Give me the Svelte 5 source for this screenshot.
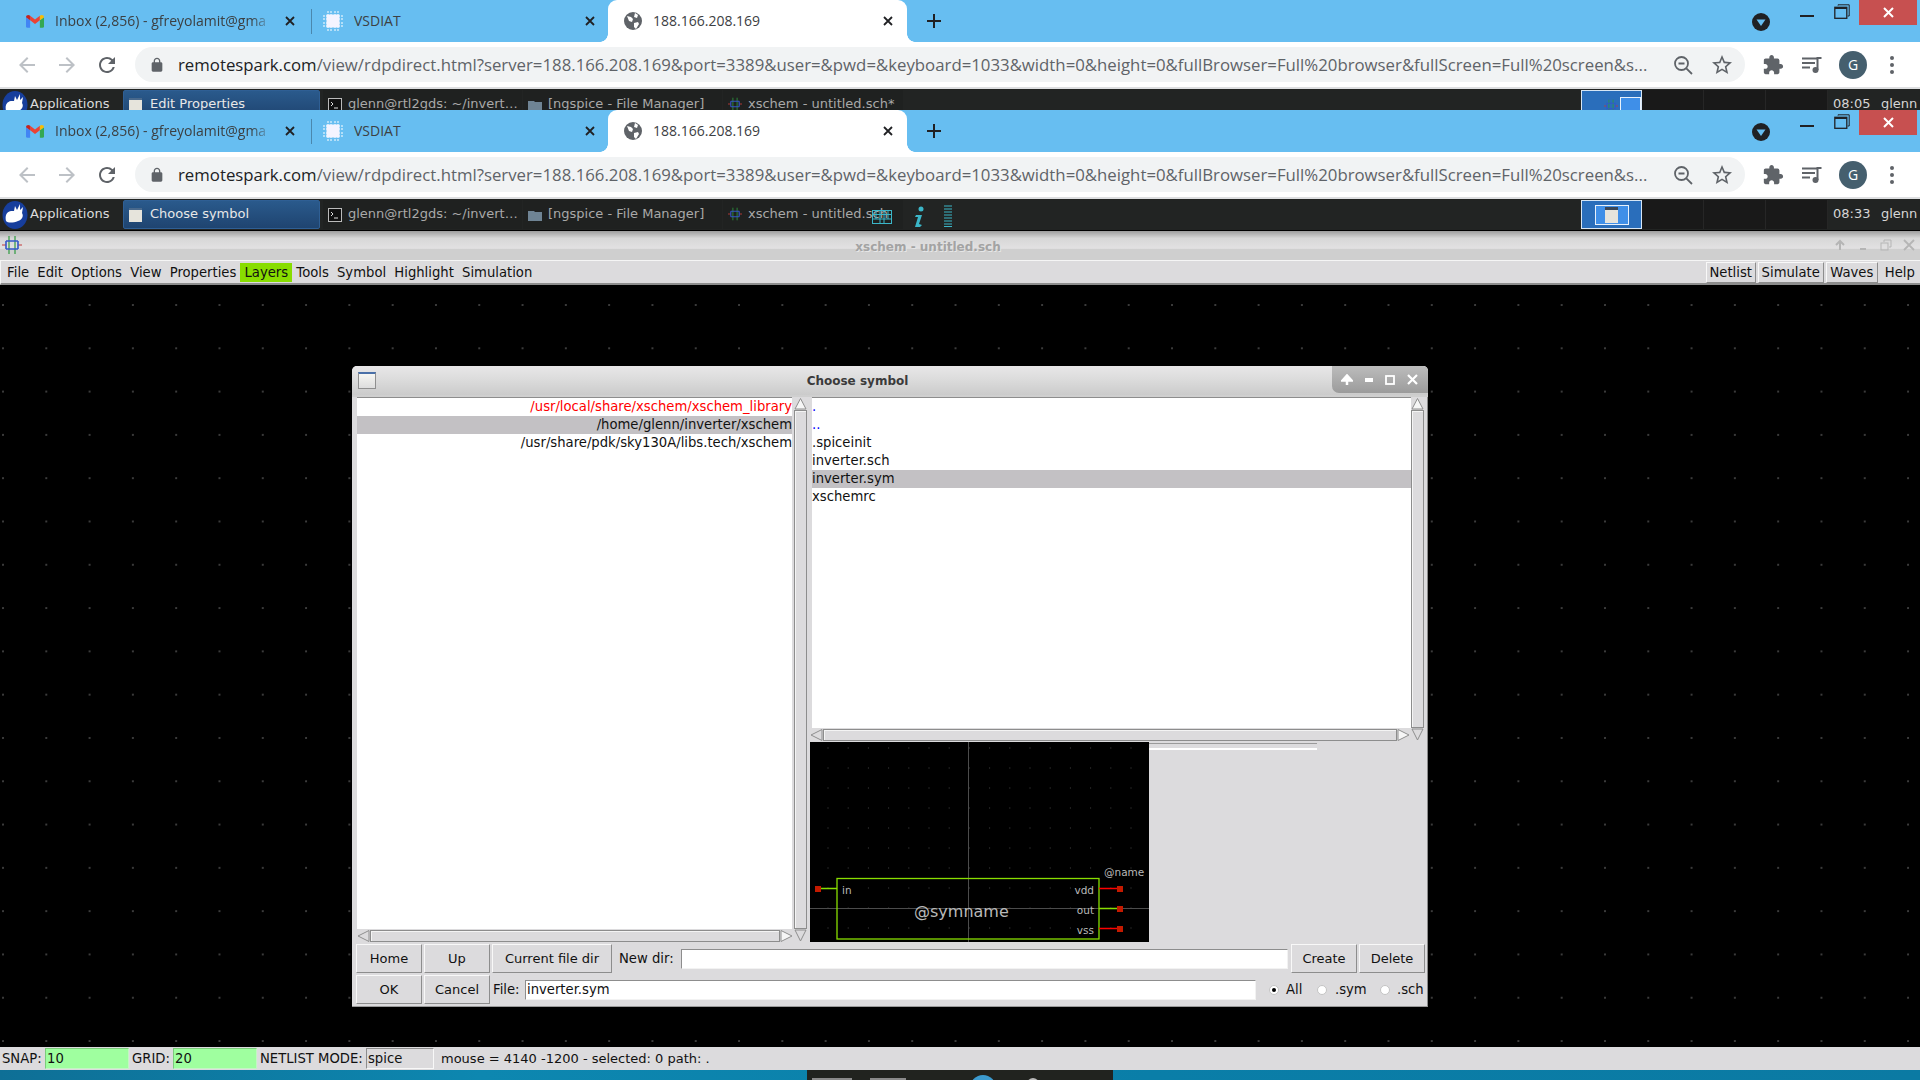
<script>
  const leftRows = [
    { name: '/usr/local/share/xschem/xschem_library', color: '#ff0000' },
    { name: '/home/glenn/inverter/xschem', selected: true },
    { name: '/usr/share/pdk/sky130A/libs.tech/xschem' }
  ]
  const rightRows = [
    { name: '.', color: '#0000ff' },
    { name: '..', color: '#0000ff' },
    { name: '.spiceinit' },
    { name: 'inverter.sch' },
    { name: 'inverter.sym', selected: true },
    { name: 'xschemrc' }
  ]
  const menus = ['File', 'Edit', 'Options', 'View', 'Properties', 'Layers', 'Tools', 'Symbol', 'Highlight', 'Simulation']
  const gridXs = Array.from({ length: 17 }, (_, i) => 17.5 + i * 20.2)
  const gridYs = Array.from({ length: 10 }, (_, i) => 5.5 + i * 20)
  const url = 'remotespark.com'
  const urlRest = '/view/rdpdirect.html?server=188.166.208.169&port=3389&user=&pwd=&keyboard=1033&width=0&height=0&fullBrowser=Full%20browser&fullScreen=Full%20screen&s...'
</script>

{#snippet xschemIcon(size)}
  <svg width={size} height={size} viewBox="0 0 20 20" fill="none">
    <path d="M7 1v18M13 1v18" stroke="#2f9a3f" stroke-width="1.2" />
    <path d="M0 10h4M16 10h4" stroke="#c43a3a" stroke-width="1.2" />
    <path d="M4 6h12M4 14h12M4 6v8M16 6v8" stroke="#3458c8" stroke-width="1.6" />
  </svg>
{/snippet}

{#snippet browser(task, clock, first)}
  <div class="tabstrip">
    <div class="tab">
      <svg class="favicon" width="18" height="14" viewBox="0 0 24 18">
        <path d="M0 4v12a2 2 0 0 0 2 2h3.5V8z" fill="#4285f4" />
        <path d="M24 4v12a2 2 0 0 1-2 2h-3.5V8z" fill="#34a853" />
        <path d="M5.5 8 12 13l6.5-5V2L12 7 5.5 2z" fill="#ea4335" />
        <path d="M0 4c0-3 3.5-4 5.5-2v6z" fill="#c5221f" />
        <path d="M24 4c0-3-3.5-4-5.5-2v6z" fill="#fbbc04" />
      </svg>
      <span class="tab-title fade">Inbox (2,856) - gfreyolamit@gma</span>
      <svg class="tab-x" width="10" height="10" viewBox="0 0 10 10"><path d="M1 1l8 8M9 1l-8 8" stroke="#202124" stroke-width="1.8" /></svg>
    </div>
    <div class="tab second">
      <svg class="favicon" width="20" height="20" viewBox="0 0 20 20">
        <path d="M5 0v20M8 0v20M12 0v20M15 0v20M0 5h20M0 8h20M0 12h20M0 15h20" stroke="#fff" stroke-width="1" stroke-dasharray="2 1" />
        <rect x="3.5" y="3.5" width="13" height="13" fill="#f4f4ff" />
      </svg>
      <span class="tab-title">VSDIAT</span>
      <svg class="tab-x" width="10" height="10" viewBox="0 0 10 10"><path d="M1 1l8 8M9 1l-8 8" stroke="#202124" stroke-width="1.8" /></svg>
    </div>
    <div class="tab active">
      <svg class="favicon" width="18" height="18" viewBox="0 0 18 18">
        <circle cx="9" cy="9" r="9" fill="#5f6368" />
        <path d="M3 4l4 1 2 2-1 3-3-1zM11 1l3 2-1 3-3-1zM10 11l4-1 1 2-3 5-2-2z" fill="#fff" />
      </svg>
      <span class="tab-title">188.166.208.169</span>
      <svg class="tab-x" width="10" height="10" viewBox="0 0 10 10"><path d="M1 1l8 8M9 1l-8 8" stroke="#202124" stroke-width="1.8" /></svg>
    </div>
    <svg class="plus" width="14" height="14" viewBox="0 0 14 14"><path d="M7 0v14M0 7h14" stroke="#202124" stroke-width="2" /></svg>
    <div class="tab-spacer"></div>
    <svg class="media" width="18" height="18" viewBox="0 0 18 18">
      <circle cx="9" cy="9" r="9" fill="#202124" />
      <path d="M4.5 6.500h9L9 13z" fill="#67bef1" />
    </svg>
    <div class="win-min"></div>
    <svg class="win-restore" width="16" height="15" viewBox="0 0 16 15" fill="none">
      <path d="M4 1.500V0.800h11.200V12h-1.500" stroke="#202124" />
      <rect x="0.800" y="3.300" width="12" height="11" stroke="#202124" stroke-width="1.300" />
      <path d="M1 4h12" stroke="#202124" stroke-width="2" />
    </svg>
    <div class="win-close">
      <svg width="11" height="11" viewBox="0 0 11 11"><path d="M1 1l9 9M10 1l-9 9" stroke="#fff" stroke-width="2" /></svg>
    </div>
  </div>

  <div class="toolbar">
    <div class="nav">
      <svg width="24" height="24" viewBox="0 0 24 24"><path d="M20 11H7.830l5.590-5.590L12 4l-8 8 8 8 1.410-1.410L7.830 13H20v-2z" fill="#bdc1c6" /></svg>
    </div>
    <div class="nav">
      <svg width="24" height="24" viewBox="0 0 24 24"><path d="M4 11h12.170l-5.590-5.590L12 4l8 8-8 8-1.410-1.410L16.170 13H4v-2z" fill="#bdc1c6" /></svg>
    </div>
    <div class="nav">
      <svg width="24" height="24" viewBox="0 0 24 24"><path d="M17.650 6.350A7.958 7.958 0 0 0 12 4c-4.420 0-7.990 3.580-7.990 8s3.570 8 7.990 8c3.730 0 6.840-2.550 7.730-6h-2.080A5.990 5.990 0 0 1 12 18c-3.310 0-6-2.690-6-6s2.690-6 6-6c1.660 0 3.140.69 4.220 1.780L13 11h7V4l-2.350 2.350z" fill="#5f6368" /></svg>
    </div>
    <div class="omnibox">
      <svg class="lock" width="16" height="16" viewBox="0 0 24 24"><path d="M18 8h-1V6c0-2.760-2.240-5-5-5S7 3.240 7 6v2H6c-1.100 0-2 .9-2 2v10c0 1.100.9 2 2 2h12c1.100 0 2-.9 2-2V10c0-1.100-.9-2-2-2zM9 6c0-1.660 1.340-3 3-3s3 1.340 3 3v2H9V6z" fill="#5f6368" /></svg>
      <div class="url"><span class="url-host">{url}</span>{urlRest}</div>
      <svg class="omni-icon" width="20" height="20" viewBox="0 0 20 20" fill="none" stroke="#5f6368" stroke-width="1.8">
        <circle cx="8.500" cy="8.500" r="6.500" /><path d="M13.300 13.300 19 19M5.500 8.500h6" />
      </svg>
      <svg class="omni-icon star" width="24" height="24" viewBox="0 0 24 24"><path d="M22 9.240l-7.190-.62L12 2 9.190 8.630 2 9.240l5.460 4.730L5.820 21 12 17.270 18.180 21l-1.630-7.030L22 9.240zM12 15.400l-3.760 2.270 1-4.280-3.320-2.880 4.380-.38L12 6.100l1.710 4.040 4.380.38-3.320 2.880 1 4.280L12 15.400z" fill="#5f6368" /></svg>
    </div>
    <svg class="puzzle" width="22" height="22" viewBox="0 0 24 24"><path d="M20.500 11H19V7c0-1.100-.9-2-2-2h-4V3.500C13 2.120 11.880 1 10.500 1S8 2.120 8 3.500V5H4c-1.100 0-1.990.9-1.990 2v3.800H3.500c1.490 0 2.700 1.210 2.700 2.700s-1.210 2.700-2.700 2.700H2V20c0 1.100.9 2 2 2h3.800v-1.500c0-1.490 1.210-2.700 2.700-2.700 1.490 0 2.700 1.210 2.700 2.700V22H17c1.100 0 2-.9 2-2v-4h1.500c1.380 0 2.500-1.120 2.500-2.500S21.880 11 20.500 11z" fill="#5f6368" /></svg>
    <svg class="queue" width="20" height="16" viewBox="0 0 20 16" fill="none">
      <path d="M0 1.500h15M0 6h13M0 10.500h8" stroke="#5f6368" stroke-width="2" />
      <circle cx="13.500" cy="13" r="3" fill="#5f6368" /><path d="M15.500 13V1h4" stroke="#5f6368" stroke-width="2" />
    </svg>
    <div class="avatar">G</div>
    <svg class="dots" width="6" height="20" viewBox="0 0 6 20"><circle cx="3" cy="3" r="2" fill="#5f6368" /><circle cx="3" cy="10" r="2" fill="#5f6368" /><circle cx="3" cy="17" r="2" fill="#5f6368" /></svg>
  </div>

  <div class="panel">
    <div class="apps">
      <svg width="26" height="28" viewBox="0 0 26 28">
        <ellipse cx="13" cy="14" rx="12.500" ry="14" fill="#173e9c" />
        <path d="M4 20c-1-5 0-9 5-10l3 0 1-5 2 4 3-6 0 6 3-3-1 6c2 3 0 7-4 8-5 2-10 2-12 0z" fill="#fff" />
      </svg>
      <span>Applications</span>
    </div>
    <div class="task current">
      <span class="doc-icon"></span>
      <span>{task}</span>
    </div>
    <div class="task">
      <svg class="task-icon" width="14" height="14" viewBox="0 0 14 14">
        <rect x="0.500" y="0.500" width="13" height="13" fill="#111" stroke="#bbb" />
        <path d="M3 4l2 2-2 2M6 10h4" stroke="#ddd" fill="none" />
      </svg>
      <span>glenn@rtl2gds: ~/invert…</span>
    </div>
    <div class="task">
      <svg class="task-icon" width="14" height="14" viewBox="0 0 14 14">
        <path d="M0 3h6l1 1h7v9H0z" fill="#6f8494" />
      </svg>
      <span>[ngspice - File Manager]</span>
    </div>
    <div class="task last">
      <span class="task-icon">{@render xschemIcon(14)}</span>
      <span>xschem - untitled.sch{first ? '*' : ''}</span>
    </div>
    {#if !first}
      <svg class="tray-kbd" width="20" height="14" viewBox="0 0 20 14" fill="none" stroke="#3bb6c8">
        <rect x="0.500" y="0.500" width="19" height="13" />
        <path d="M0 4.500h20M0 9h20M4 0v9M8 0v14M12 0v14M16 0v9" />
      </svg>
      <svg class="tray-info" width="12" height="22" viewBox="0 0 12 22">
        <circle cx="8" cy="3" r="2.500" fill="#3bb6c8" />
        <path d="M3 9h6l-3 9 3 1-2 2H2l3-10H2z" fill="#3bb6c8" />
      </svg>
      <svg class="tray-bars" width="8" height="22" viewBox="0 0 8 22">
        <path d="M0 1h8M0 4h8M0 7h8M0 10h8M0 13h8M0 16h8M0 19h8M0 21.500h8" stroke="#3bb6c8" />
      </svg>
    {/if}
    <div class="panel-spacer"></div>
    <div class="pager">
      <div class="workspace on">
        {#if first}
          <span class="ws-xschem">{@render xschemIcon(14)}</span>
          <span class="ws-win small"></span>
        {:else}
          <span class="ws-win"><span class="ws-doc"></span></span>
        {/if}
      </div>
      <div class="workspace"></div>
      <div class="workspace"></div>
      <div class="workspace"></div>
    </div>
    <span class="clock">{clock}</span>
    <span class="user">glenn</span>
  </div>
{/snippet}

{#snippet vbar()}
  <div class="vbar">
    <svg class="arrow" width="13" height="13" viewBox="0 0 13 13"><path d="M6.500 1.500 12 12H1z" fill="#f6f6f6" stroke="#8e8e8e" /></svg>
    <div class="thumb"></div>
    <svg class="arrow" width="13" height="13" viewBox="0 0 13 13"><path d="M6.500 12 12 1H1z" fill="#dcdbdd" stroke="#8e8e8e" /></svg>
  </div>
{/snippet}

{#snippet hbar()}
  <div class="hbar">
    <svg class="arrow" width="13" height="12" viewBox="0 0 13 12"><path d="M1 6l11-5.500v11z" fill="#dcdbdd" stroke="#8e8e8e" /></svg>
    <div class="thumb"></div>
    <svg class="arrow" width="13" height="12" viewBox="0 0 13 12"><path d="M12 6 1 .5v11z" fill="#f6f6f6" stroke="#8e8e8e" /></svg>
  </div>
{/snippet}

<div class="page">
  <div class="clipped">{@render browser('Edit Properties', '08:05', true)}</div>
  {@render browser('Choose symbol', '08:33', false)}

  <div class="xschem-title">
    <span class="xschem-icon">{@render xschemIcon(20)}</span>
    <span class="xschem-name">xschem - untitled.sch</span>
    <div class="xschem-controls">
      <svg width="12" height="12" viewBox="0 0 12 12"><path d="M6 11V2M2 6l4-4 4 4" stroke="#b5b5b5" stroke-width="2" fill="none" /></svg>
      <svg width="12" height="12" viewBox="0 0 12 12"><path d="M3 10h6" stroke="#b5b5b5" stroke-width="2" /></svg>
      <svg width="12" height="12" viewBox="0 0 12 12" fill="none" stroke="#b5b5b5"><rect x="1" y="4" width="7" height="7" /><path d="M4 3V1h7v7H9" /></svg>
      <svg width="12" height="12" viewBox="0 0 12 12"><path d="M1 1l10 10M11 1 1 11" stroke="#b5b5b5" stroke-width="1.8" /></svg>
    </div>
  </div>

  <div class="menubar">
    {#each menus as m}
      <span class="menu" class:layers={m === 'Layers'}>{m}</span>
    {/each}
    <div class="menu-spacer"></div>
    <span class="menu-btn netlist">Netlist</span>
    <span class="menu-btn simulate">Simulate</span>
    <span class="menu-btn waves">Waves</span>
    <span class="menu help">Help</span>
  </div>

  <div class="canvas">
    <div class="dialog">
      <div class="dialog-title">
        <span class="dialog-icon"></span>
        <span class="dialog-name">Choose symbol</span>
        <div class="dialog-controls">
          <svg width="12" height="12" viewBox="0 0 12 12"><path d="M6 11V3M1.500 6.500 6 1.500l4.500 5z" stroke="#fff" stroke-width="2.5" fill="#fff" /></svg>
          <svg width="8" height="4" viewBox="0 0 8 4"><rect width="8" height="4" fill="#fff" /></svg>
          <svg width="10" height="10" viewBox="0 0 10 10" fill="none"><rect x="1" y="1" width="8" height="8" stroke="#fff" stroke-width="1.8" /></svg>
          <svg width="11" height="11" viewBox="0 0 11 11"><path d="M1 1l9 9M10 1l-9 9" stroke="#fff" stroke-width="2.2" /></svg>
        </div>
      </div>

      <div class="panes">
        <div class="pane-left">
          <div class="list-grid">
            <div class="list left-list">
              {#each leftRows as row}
                <div class="row" class:sel={row.selected} style:color={row.color}>{row.name}</div>
              {/each}
            </div>
            {@render vbar()}
            {@render hbar()}
          </div>
        </div>

        <div class="pane-right">
          <div class="list-grid">
            <div class="list right-list">
              {#each rightRows as row}
                <div class="row" class:sel={row.selected} style:color={row.color}>{row.name}</div>
              {/each}
            </div>
            {@render vbar()}
            {@render hbar()}
          </div>
          <div class="preview-row">
            <svg class="preview" width="339" height="200" viewBox="0 0 339 200">
              <rect width="339" height="200" fill="#000" />
              {#each gridYs as y}
                {#each gridXs as x}
                  <rect x={x} y={y} width="1" height="1" fill="#444" />
                {/each}
              {/each}
              <path d="M158.500 0v200M0 166.500h339" stroke="#4c4c4c" fill="none" />
              <rect x="27" y="136.500" width="262" height="60.500" fill="none" stroke="#88dd00" stroke-width="1.3" />
              <path d="M10 146.500h17M289 166.500h21" stroke="#88dd00" stroke-width="1.3" />
              <path d="M289 146.500h21M289 186.500h21" stroke="#ff0000" stroke-width="1.3" />
              <rect x="5" y="144" width="6" height="6" fill="#c41a00" />
              <rect x="307" y="144" width="6" height="6" fill="#c41a00" />
              <rect x="307" y="164" width="6" height="6" fill="#c41a00" />
              <rect x="307" y="184" width="6" height="6" fill="#c41a00" />
              <g class="sym-text">
                <text x="32" y="152">in</text>
                <text x="284" y="152" text-anchor="end">vdd</text>
                <text x="284" y="172" text-anchor="end">out</text>
                <text x="284" y="192" text-anchor="end">vss</text>
                <text x="294" y="134">@name</text>
                <text x="104" y="175" class="sym-big">@symname</text>
              </g>
            </svg>
            <div class="preview-side">
              <div class="glitch"></div>
            </div>
          </div>
        </div>
      </div>

      <div class="button-row">
        <button class="w66">Home</button>
        <button class="w66">Up</button>
        <button class="w120">Current file dir</button>
        <label class="lbl newdir" for="newdir">New dir:</label>
        <input id="newdir" class="entry" value="" />
        <button class="w66 end">Create</button>
        <button class="w66">Delete</button>
      </div>

      <div class="button-row">
        <button class="w66">OK</button>
        <button class="w66">Cancel</button>
        <label class="lbl file" for="file">File:</label>
        <input id="file" class="entry file-entry" value="inverter.sym" />
        <div class="radios">
          <span class="radio on"></span><span class="radio-lbl all">All</span>
          <span class="radio"></span><span class="radio-lbl sym">.sym</span>
          <span class="radio"></span><span class="radio-lbl">.sch</span>
        </div>
      </div>
    </div>
  </div>

  <div class="statusbar">
    <span class="st snap-lbl">SNAP:</span>
    <input class="st-entry green" value="10" />
    <span class="st grid-lbl">GRID:</span>
    <input class="st-entry green" value="20" />
    <span class="st mode-lbl">NETLIST MODE:</span>
    <input class="st-entry mode" value="spice" />
    <span class="st mouse">mouse = 4140 -1200 - selected: 0 path: .</span>
  </div>

  <div class="desktop">
    <div class="dock">
      <span class="dock-item one"></span>
      <span class="dock-item two"></span>
      <span class="dock-globe"></span>
      <span class="dock-dot"></span>
    </div>
  </div>
</div>

<style>
  :global(body) {
    margin: 0;
    background: #000;
  }

  .page {
    width: 1920px;
    height: 1080px;
    overflow: hidden;
    display: flex;
    flex-direction: column;
    font-family: 'DejaVu Sans', sans-serif;
    font-size: 13.2px;
    color: #111;
  }

  .clipped {
    height: 110px;
    overflow: hidden;
    flex: none;
  }

  /* browser chrome */
  .tabstrip {
    height: 42px;
    background: #67bef1;
    display: flex;
    align-items: center;
    padding-left: 8px;
    font-family: 'Open Sans', sans-serif;
    font-size: 14px;
    color: #3c4043;
  }

  .tab {
    width: 300px;
    height: 42px;
    flex: none;
    display: flex;
    align-items: center;
    position: relative;
    padding-left: 18px;
    box-sizing: border-box;
  }

  .tab.second {
    padding-left: 14px;
    border-left: 1px solid transparent;
  }

  .tab.second::before {
    content: '';
    position: absolute;
    left: 2px;
    top: 9px;
    height: 25px;
    width: 1px;
    background: #4a87ad;
  }

  .tab.active {
    width: 299px;
    background: #fff;
    border-radius: 9px 9px 0 0;
    padding-left: 16px;
  }

  .tab.active .tab-x {
    right: 14px;
  }

  .tab.active::before,
  .tab.active::after {
    content: '';
    position: absolute;
    bottom: 0;
    width: 8px;
    height: 8px;
  }

  .tab.active::before {
    left: -8px;
    background: radial-gradient(circle at 0 0, #67bef1 7.5px, #fff 8px);
  }

  .tab.active::after {
    right: -8px;
    background: radial-gradient(circle at 100% 0, #67bef1 7.5px, #fff 8px);
  }

  .favicon {
    flex: none;
  }

  .tab-title {
    margin-left: 11px;
    width: 218px;
    white-space: nowrap;
    overflow: hidden;
    padding-bottom: 1px;
  }

  .fade {
    -webkit-mask-image: linear-gradient(90deg, #000 90%, transparent 100%);
    mask-image: linear-gradient(90deg, #000 90%, transparent 100%);
  }

  .tab-x {
    position: absolute;
    right: 13px;
    top: 16px;
  }

  .plus {
    margin-left: 20px;
    flex: none;
  }

  .tab-spacer {
    flex: 1;
  }

  .media {
    margin-top: 1px;
    flex: none;
  }

  .win-min {
    width: 14px;
    height: 2px;
    background: #202124;
    margin: -10px 0 0 30px;
    flex: none;
  }

  .win-restore {
    margin: -20px 0 0 20px;
    flex: none;
  }

  .win-close {
    width: 58px;
    height: 25px;
    background: #c75050;
    margin: -17px 3px 0 9px;
    display: flex;
    align-items: center;
    justify-content: center;
    flex: none;
  }

  .toolbar {
    height: 45px;
    background: #fff;
    display: flex;
    align-items: center;
    padding-left: 7px;
    border-bottom: 2px solid #dedfe1;
  }

  .nav {
    width: 40px;
    display: flex;
    justify-content: center;
    flex: none;
  }

  .omnibox {
    width: 1610px;
    height: 35px;
    margin-left: 8px;
    flex: none;
    background: #f1f3f4;
    border-radius: 18px;
    display: flex;
    align-items: center;
    padding-left: 14px;
    box-sizing: border-box;
  }

  .lock {
    flex: none;
  }

  .url {
    margin-left: 13px;
    width: 1476px;
    flex: none;
    white-space: nowrap;
    overflow: hidden;
    font-family: 'Open Sans', sans-serif;
    font-size: 16.8px;
    color: #5f6368;
  }

  .url-host {
    color: #202124;
  }

  .omni-icon {
    flex: none;
    margin-left: 19px;
  }

  .omni-icon.star {
    margin-left: 17px;
  }

  .puzzle {
    margin-left: 17px;
    flex: none;
  }

  .queue {
    margin-left: 18px;
    flex: none;
  }

  .avatar {
    width: 28px;
    height: 28px;
    border-radius: 50%;
    background: #455f6e;
    color: #fff;
    font-family: 'Open Sans', sans-serif;
    font-size: 14px;
    display: flex;
    align-items: center;
    justify-content: center;
    margin-left: 17px;
    flex: none;
  }

  .dots {
    margin-left: 22px;
    flex: none;
  }

  /* xfce panel */
  .panel {
    height: 31px;
    flex: none;
    background: #222423;
    display: flex;
    align-items: center;
    color: #c9c9c9;
    font-size: 13px;
    position: relative;
    white-space: nowrap;
  }

  .apps {
    width: 123px;
    height: 31px;
    display: flex;
    align-items: center;
    gap: 2px;
    padding-left: 2px;
    box-sizing: border-box;
    color: #dcdcdc;
    flex: none;
  }

  .apps span,
  .task span {
    margin-bottom: 2px;
  }

  .task {
    width: 199px;
    height: 29px;
    margin-right: 1px;
    display: flex;
    align-items: center;
    box-sizing: border-box;
    padding-left: 5px;
    color: #a9a9a9;
    flex: none;
    background: #1f2120;
  }

  .task.current {
    width: 197px;
    margin-right: 3px;
    background: linear-gradient(#2a5a8c, #1f4470);
    border: 1px solid #2f5f94;
    border-radius: 2px;
    color: #e8e8e8;
    padding-left: 5px;
    gap: 8px;
  }

  .task.last {
    width: 180px;
  }

  .task span.doc-icon {
    width: 13px;
    height: 12px;
    background: #e6e4dc;
    border-top: 2px solid #49698c;
    flex: none;
    margin-bottom: 0;
  }

  .task-icon {
    width: 14px;
    height: 14px;
    margin-right: 6px;
    flex: none;
    display: flex;
  }

  .tray-kbd {
    position: absolute;
    left: 872px;
    top: 11px;
  }

  .tray-info {
    position: absolute;
    left: 913px;
    top: 7px;
  }

  .tray-bars {
    position: absolute;
    left: 944px;
    top: 6px;
  }

  .panel-spacer {
    flex: 1;
  }

  .pager {
    display: flex;
    background: #191919;
    height: 29px;
    flex: none;
    margin-right: 5px;
  }

  .workspace {
    width: 62px;
    height: 29px;
    box-sizing: border-box;
    border-right: 1px solid #262626;
    position: relative;
  }

  .workspace.on {
    width: 61px;
    background: #2a6ebb;
    border: 1px solid #d7e6f5;
    display: flex;
    align-items: center;
    justify-content: center;
  }

  .ws-win {
    width: 34px;
    height: 20px;
    box-sizing: border-box;
    border: 1px solid #e8f1fb;
    background: #3f8fe8;
    display: flex;
    align-items: center;
    justify-content: center;
  }

  .ws-win.small {
    width: 21px;
    height: 16px;
    position: absolute;
    right: 0;
    top: 6px;
  }

  .ws-xschem {
    position: absolute;
    left: 22px;
    top: 8px;
  }

  .ws-doc {
    width: 13px;
    height: 16px;
    background: #e6e4dc;
    border-top: 3px solid #3a4656;
    box-sizing: border-box;
  }

  .clock {
    width: 48px;
    flex: none;
    color: #d6d6d6;
    margin-bottom: 2px;
  }

  .user {
    width: 39px;
    flex: none;
    color: #d6d6d6;
    margin-bottom: 2px;
  }

  /* xschem window */
  .xschem-title {
    height: 29px;
    margin-top: 1px;
    flex: none;
    background: linear-gradient(#9d9d9d 0, #d7d7d7 25%, #e2e1e2 60%, #cfcfcf 62%, #cfcfcf 100%);
    position: relative;
    display: flex;
    align-items: center;
    justify-content: center;
  }

  .xschem-icon {
    position: absolute;
    left: 2px;
    top: 4px;
  }

  .xschem-name {
    font-size: 12px;
    font-weight: bold;
    color: #a3a3a3;
    text-shadow: 1px 1px 0 #e6e6e6;
    margin-left: -64px;
    padding-top: 2px;
  }

  .xschem-controls {
    position: absolute;
    right: 5px;
    top: 8px;
    display: flex;
    gap: 11px;
  }

  .menubar {
    height: 25px;
    flex: none;
    background: #dcdbdd;
    border-top: 1px solid #f5f5f5;
    border-left: 1px solid #f5f5f5;
    border-bottom: 2px solid #8d8d8d;
    box-sizing: border-box;
    display: flex;
    align-items: center;
    padding: 1px 0 0 2px;
    white-space: nowrap;
  }

  .menu {
    padding: 0 4.1px;
    height: 19px;
    line-height: 19px;
  }

  .menu.layers {
    background: #88dd00;
  }

  .menu-spacer {
    flex: 1;
  }

  .menu-btn {
    height: 21px;
    line-height: 19px;
    box-sizing: border-box;
    margin-right: 2px;
    border: 1px solid;
    border-color: #f8f8f8 #8d8d8d #8d8d8d #f8f8f8;
    text-align: center;
  }

  .netlist {
    width: 50px;
  }

  .simulate {
    width: 66px;
  }

  .waves {
    width: 52px;
  }

  .menu.help {
    margin-left: 1px;
    margin-right: 1px;
  }

  .canvas {
    height: 762px;
    flex: none;
    position: relative;
    background-color: #000;
    background-image: radial-gradient(circle at 1px 1px, #3c3c3c 0.7px, transparent 1px);
    background-size: 43.3px 43.3px;
    background-position: 2px 19px;
  }

  /* choose symbol dialog */
  .dialog {
    position: absolute;
    left: 352px;
    top: 81px;
    width: 1076px;
    height: 641px;
    box-sizing: border-box;
    background: #dcdbdd;
    border-radius: 5px 5px 0 0;
    padding: 0 2px 0 4px;
    border-right: 1px solid #8a8a8a;
    border-bottom: 1px solid #9a9a9a;
  }

  .dialog-title {
    height: 29px;
    margin: 0 -3px 0 -4px;
    background: linear-gradient(#e8e7e8, #dcdcdc 45%, #cbcbcb);
    border-radius: 5px 5px 0 0;
    border-bottom: 2px solid #cfcfcf;
    position: relative;
    display: flex;
    align-items: center;
    justify-content: center;
    box-sizing: content-box;
  }

  .dialog-icon {
    position: absolute;
    left: 6px;
    top: 6px;
    width: 18px;
    height: 17px;
    box-sizing: border-box;
    background: linear-gradient(#f6f6f2, #ddd);
    border: 1px solid #8f8f8f;
    border-top: 2px solid #4a70a8;
  }

  .dialog-name {
    font-size: 12px;
    font-weight: bold;
    color: #3b3b3b;
    margin-right: 65px;
    padding-top: 1px;
  }

  .dialog-controls {
    position: absolute;
    right: 0;
    top: 0;
    width: 96px;
    height: 27px;
    box-sizing: border-box;
    background: linear-gradient(#bcbcbc, #9b9b9b);
    border-radius: 0 5px 0 7px;
    display: flex;
    align-items: center;
    justify-content: space-between;
    padding: 0 10px 0 9px;
  }

  .panes {
    display: flex;
    gap: 3px;
    height: 545px;
    margin-left: 1px;
  }

  .pane-left {
    width: 450px;
    display: flex;
    flex-direction: column;
    flex: none;
  }

  .pane-right {
    width: 614px;
    display: flex;
    flex-direction: column;
    flex: none;
  }

  /* list with its two scrollbars, the vertical one runs the full height */
  .list-grid {
    display: grid;
    grid-template-columns: minmax(0, 1fr) 13px;
    grid-template-rows: minmax(0, 1fr) 13px;
    flex: 1;
    min-height: 0;
  }

  .list {
    background: #fff;
    border-top: 1px solid #8d8d8d;
    box-sizing: border-box;
    overflow: hidden;
  }

  .left-list {
    margin-right: 2px;
  }

  .right-list {
    margin-left: 2px;
  }

  .row {
    height: 18px;
    line-height: 18px;
    white-space: nowrap;
    font-size: 13.2px;
  }

  .row.sel {
    background: #c3c1c4;
  }

  .left-list .row {
    text-align: right;
  }

  .vbar {
    grid-column: 2;
    grid-row: 1 / 3;
    display: flex;
    flex-direction: column;
    background: #dcdbdd;
    min-height: 0;
  }

  .hbar {
    grid-column: 1;
    grid-row: 2;
    display: flex;
    align-items: flex-end;
    background: #dcdbdd;
    margin-right: 1px;
  }

  .hbar .thumb {
    height: 12px;
  }

  .vbar .thumb,
  .hbar .thumb {
    flex: 1;
    box-sizing: border-box;
    border: 1px solid #8d8d8d;
    box-shadow: inset 1px 1px 0 #f4f4f4;
  }

  .arrow {
    flex: none;
  }

  .preview-row {
    display: flex;
    height: 200px;
    flex: none;
    margin-top: 1px;
  }

  .preview {
    flex: none;
    display: block;
  }

  .preview-side {
    flex: 1;
  }

  .glitch {
    width: 168px;
    height: 4px;
    border-top: 1px solid #9a9a9a;
    border-bottom: 2px solid #fff;
    margin-top: 1px;
  }

  .sym-text text {
    fill: #b9b9b9;
    font-family: 'DejaVu Sans', sans-serif;
    font-size: 10.5px;
  }

  .sym-text text.sym-big {
    font-size: 16px;
  }

  .button-row {
    display: flex;
    align-items: center;
    height: 29px;
    gap: 2px;
    margin-top: 2px;
  }

  button {
    height: 29px;
    font-family: 'DejaVu Sans', sans-serif;
    font-size: 13px;
    color: #111;
    background: #dcdbdd;
    box-sizing: border-box;
    border: 1px solid;
    border-color: #f8f8f8 #8d8d8d #8d8d8d #f8f8f8;
    padding: 0;
    flex: none;
  }

  .w66 {
    width: 66px;
  }

  .w120 {
    width: 120px;
  }

  .w66.end {
    margin-left: 1px;
  }

  .lbl {
    flex: none;
  }

  .newdir {
    margin-left: 5px;
    width: 60px;
  }

  .file {
    margin-left: 1px;
    width: 30px;
  }

  .entry {
    height: 20px;
    flex: 1;
    min-width: 0;
    box-sizing: border-box;
    border: 1px solid;
    border-color: #8d8d8d #f2f2f2 #f2f2f2 #8d8d8d;
    background: #fff;
    font-family: 'DejaVu Sans', sans-serif;
    font-size: 13.2px;
    color: #111;
    padding: 0 1px;
    outline: none;
  }

  .file-entry {
    flex: none;
    width: 731px;
  }

  .radios {
    display: flex;
    align-items: center;
    margin-left: 11px;
  }

  .radio {
    width: 10px;
    height: 10px;
    border-radius: 50%;
    background: #fff;
    border: 1px solid #c4c4c4;
    box-sizing: border-box;
    flex: none;
    position: relative;
  }

  .radio.on::after {
    content: '';
    position: absolute;
    left: 2px;
    top: 2px;
    width: 4px;
    height: 4px;
    border-radius: 50%;
    background: #000;
  }

  .radio-lbl {
    margin-left: 7px;
  }

  .radio-lbl.all {
    width: 31px;
  }

  .radio-lbl.sym {
    margin-left: 8px;
    width: 45px;
  }

  /* status bar */
  .statusbar {
    height: 23px;
    flex: none;
    background: #dcdbdd;
    display: flex;
    align-items: center;
    padding-left: 2px;
    white-space: nowrap;
  }

  .st {
    flex: none;
  }

  .snap-lbl {
    width: 43px;
  }

  .grid-lbl {
    width: 41px;
    margin-left: 3px;
  }

  .mode-lbl {
    width: 106px;
    margin-left: 3px;
  }

  .st-entry {
    height: 21px;
    box-sizing: border-box;
    border: 1px solid;
    font-family: 'DejaVu Sans', sans-serif;
    font-size: 13.2px;
    color: #111;
    padding: 0 1px;
    outline: none;
    flex: none;
  }

  .green {
    background: #9fff9f;
    border-color: #7ccc7c #c4f5c4 #c4f5c4 #7ccc7c;
    width: 84px;
  }

  .mode {
    background: #dcdbdd;
    border-color: #8d8d8d #f8f8f8 #f8f8f8 #8d8d8d;
    width: 68px;
  }

  .mouse {
    margin-left: 7px;
    font-size: 13px;
  }

  .desktop {
    height: 10px;
    flex: none;
    background: linear-gradient(90deg, #0e6f96, #0d87b0 25%, #0a7ea8 60%, #0b7aa3);
    display: flex;
    justify-content: center;
    overflow: hidden;
  }

  .dock {
    width: 306px;
    height: 10px;
    background: #21231f;
    position: relative;
    flex: none;
  }

  .dock-item {
    position: absolute;
    top: 8px;
    height: 2px;
    background: #8a8a8a;
  }

  .dock-item.one {
    left: 5px;
    width: 40px;
  }

  .dock-item.two {
    left: 63px;
    width: 36px;
  }

  .dock-globe {
    position: absolute;
    left: 163px;
    top: 5px;
    width: 26px;
    height: 26px;
    border-radius: 50%;
    background: #3c9bcf;
  }

  .dock-dot {
    position: absolute;
    left: 220px;
    top: 8px;
    width: 12px;
    height: 12px;
    border-radius: 50%;
    background: #b9b9b9;
  }
</style>
